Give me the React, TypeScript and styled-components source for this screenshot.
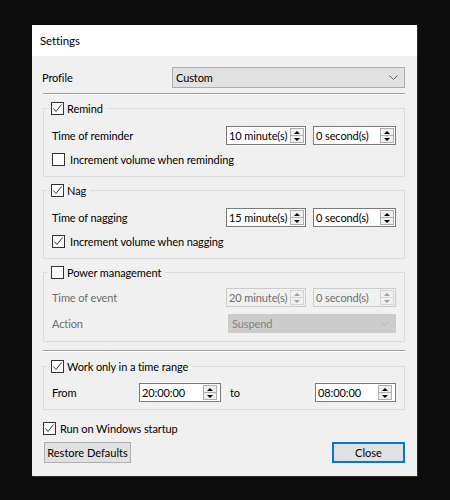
import styled, { createGlobalStyle } from "styled-components";

const GlobalStyle = createGlobalStyle`
  html, body {
    margin: 0;
    padding: 0;
    background: #0c0c0c;
  }
  body {
    font-family: Lato, "Liberation Sans", sans-serif;
    font-size: 11px;
    letter-spacing: -0.1px;
    color: #000;
  }
`;

type CheckProps = { checked?: boolean };

function CheckBox({ checked }: CheckProps) {
  return (
    <Box>
      {checked && (
        <svg width="11" height="11" viewBox="0 0 11 11">
          <polyline points="1.5,5.5 4,8.5 9.5,1.5" fill="none" stroke="#333" strokeWidth="1" />
        </svg>
      )}
    </Box>
  );
}

function Chevron({ color }: { color: string }) {
  return (
    <svg width="9" height="5" viewBox="0 0 9 5">
      <polyline points="0.5,0.5 4.5,4.5 8.5,0.5" fill="none" stroke={color} strokeWidth="1" />
    </svg>
  );
}

type SpinProps = { value: string; width: number; disabled?: boolean; inset?: number };

function Spin({ value, width, disabled, inset = 1 }: SpinProps) {
  return (
    <SpinField $width={width} $disabled={disabled}>
      <SpinText>{value}</SpinText>
      <UpDown $inset={inset} $disabled={disabled}>
        <Step>
          <ArrowUp $disabled={disabled} />
        </Step>
        <Step>
          <ArrowDown $disabled={disabled} />
        </Step>
      </UpDown>
    </SpinField>
  );
}

export default function App() {
  return (
    <Screen>
      <GlobalStyle />
      <Window>
        <TitleBar>Settings</TitleBar>
        <Body>
          <ProfileRow>
            <ProfileLabel>Profile</ProfileLabel>
            <Combo>
              <span>Custom</span>
              <Chevron color="#606060" />
            </Combo>
          </ProfileRow>
          <Separator $top={5} />

          <Group $top={6}>
            <Legend>
              <LegendInner>
                <CheckBox checked />
                Remind
              </LegendInner>
            </Legend>
            <GroupBody $top={10} $bottom={9}>
              <Row>
                <Label>Time of reminder</Label>
                <Spin value="10 minute(s)" width={80} />
                <Spin value="0 second(s)" width={83} />
              </Row>
              <CheckRow $gap={5}>
                <CheckBox />
                Increment volume when reminding
              </CheckRow>
            </GroupBody>
          </Group>

          <Group $top={6}>
            <Legend>
              <LegendInner>
                <CheckBox checked />
                Nag
              </LegendInner>
            </Legend>
            <GroupBody $top={10} $bottom={9}>
              <Row>
                <Label>Time of nagging</Label>
                <Spin value="15 minute(s)" width={80} />
                <Spin value="0 second(s)" width={83} />
              </Row>
              <CheckRow $gap={5}>
                <CheckBox checked />
                Increment volume when nagging
              </CheckRow>
            </GroupBody>
          </Group>

          <Group $top={6}>
            <Legend>
              <LegendInner>
                <CheckBox />
                Power management
              </LegendInner>
            </Legend>
            <GroupBody $top={8} $bottom={8}>
              <Row>
                <Label $disabled>Time of event</Label>
                <Spin value="20 minute(s)" width={80} disabled />
                <Spin value="0 second(s)" width={83} disabled />
              </Row>
              <Row>
                <Label $disabled>Action</Label>
                <DisabledCombo>
                  <span>Suspend</span>
                  <Chevron color="#b4b4b4" />
                </DisabledCombo>
              </Row>
            </GroupBody>
          </Group>

          <Separator $top={8} />

          <Group $top={7}>
            <Legend>
              <LegendInner>
                <CheckBox checked />
                Work only in a time range
              </LegendInner>
            </Legend>
            <GroupBody $top={9} $bottom={7}>
              <Row>
                <FromLabel>From</FromLabel>
                <Spin value="20:00:00" width={82} inset={3} />
                <ToLabel>to</ToLabel>
                <Spin value="08:00:00" width={81} inset={3} />
              </Row>
            </GroupBody>
          </Group>

          <StartupRow $gap={4}>
            <CheckBox checked />
            Run on Windows startup
          </StartupRow>

          <ButtonRow>
            <Button>Restore Defaults</Button>
            <Button $primary>Close</Button>
          </ButtonRow>
        </Body>
      </Window>
    </Screen>
  );
}

const Screen = styled.div`
  min-height: 500px;
  padding: 25px 0 0 32px;
  box-sizing: border-box;
`;

const Window = styled.div`
  width: 385px;
  height: 451px;
  background: #f0f0f0;
  display: flex;
  flex-direction: column;
  box-shadow: 1px 1px 0 #2b2b2b;
`;

const TitleBar = styled.div`
  height: 31px;
  flex-shrink: 0;
  background: #fff;
  display: flex;
  align-items: center;
  padding-left: 8px;
  font-size: 11.5px;
`;

const Body = styled.div`
  display: flex;
  flex-direction: column;
  padding: 11px 12px 12px 11px;
`;

const ProfileRow = styled.div`
  display: flex;
  align-items: center;
  height: 21px;
`;

const ProfileLabel = styled.div`
  width: 130px;
  margin-left: -1px;
`;

const Combo = styled.div`
  flex: 1;
  height: 21px;
  box-sizing: border-box;
  display: flex;
  align-items: center;
  justify-content: space-between;
  padding: 0 6px 0 3px;
  background: #e1e1e1;
  border: 1px solid #adadad;
`;

const DisabledCombo = styled(Combo)`
  flex: 0 0 168px;
  height: 19px;
  background: #cccccc;
  border-color: #cccccc;
  color: #838383;
`;

const Separator = styled.div<{ $top: number }>`
  margin-top: ${(p) => p.$top}px;
  border-top: 1px solid #a0a0a0;
  border-bottom: 1px solid #fff;
`;

const Group = styled.fieldset<{ $top: number }>`
  margin: ${(p) => p.$top}px 0 0;
  padding: 0;
  min-width: 0;
  border: 1px solid #dcdcdc;
`;

const Legend = styled.legend`
  margin-left: 3px;
  padding: 0 4px;
  height: 15px;
  line-height: 15px;
`;

const LegendInner = styled.span`
  display: inline-flex;
  align-items: center;
  gap: 3px;
  height: 15px;
`;

const GroupBody = styled.div<{ $top: number; $bottom: number }>`
  display: flex;
  flex-direction: column;
  gap: 7px;
  padding: ${(p) => p.$top}px 8px ${(p) => p.$bottom}px 8px;
`;

const Row = styled.div`
  display: flex;
  align-items: center;
  gap: 7px;
  height: 19px;
`;

const Label = styled.div<{ $disabled?: boolean }>`
  flex: 1;
  color: ${(p) => (p.$disabled ? "#6d6d6d" : "#000")};
`;

const FromLabel = styled.div`
  width: 80px;
`;

const ToLabel = styled.div`
  flex: 1;
  padding-left: 2px;
`;

const CheckRow = styled.div<{ $gap: number }>`
  display: flex;
  align-items: center;
  gap: ${(p) => p.$gap}px;
  height: 15px;
`;

const StartupRow = styled(CheckRow)`
  margin-top: 11px;
`;

const Box = styled.span`
  width: 13px;
  height: 13px;
  box-sizing: border-box;
  flex-shrink: 0;
  display: inline-flex;
  align-items: center;
  justify-content: center;
  background: #fff;
  border: 1px solid #333;
`;

const SpinField = styled.div<{ $width: number; $disabled?: boolean }>`
  width: ${(p) => p.$width}px;
  height: 19px;
  box-sizing: border-box;
  display: flex;
  align-items: center;
  background: ${(p) => (p.$disabled ? "#f0f0f0" : "#fff")};
  border: 1px solid ${(p) => (p.$disabled ? "#cccccc" : "#7a7a7a")};
  color: ${(p) => (p.$disabled ? "#6d6d6d" : "#000")};
`;

const SpinText = styled.span`
  flex: 1;
  padding-left: 2px;
  white-space: nowrap;
`;

const UpDown = styled.div<{ $inset: number; $disabled?: boolean }>`
  width: 14px;
  height: 15px;
  box-sizing: border-box;
  margin-right: ${(p) => p.$inset}px;
  display: flex;
  flex-direction: column;
  background: #f0f0f0;
  border: 1px solid ${(p) => (p.$disabled ? "#d5d5d5" : "#adadad")};

  & > * + * {
    border-top: 1px solid ${(p) => (p.$disabled ? "#d5d5d5" : "#adadad")};
  }
`;

const Step = styled.div`
  flex: 1;
  display: flex;
  align-items: center;
  justify-content: center;
`;

const ArrowUp = styled.span<{ $disabled?: boolean }>`
  width: 0;
  height: 0;
  border-left: 3px solid transparent;
  border-right: 3px solid transparent;
  border-bottom: 3px solid ${(p) => (p.$disabled ? "#a0a0a0" : "#000")};
`;

const ArrowDown = styled.span<{ $disabled?: boolean }>`
  width: 0;
  height: 0;
  border-left: 3px solid transparent;
  border-right: 3px solid transparent;
  border-top: 3px solid ${(p) => (p.$disabled ? "#a0a0a0" : "#000")};
`;

const ButtonRow = styled.div`
  display: flex;
  justify-content: space-between;
  margin-top: 6px;
  padding-left: 1px;
`;

const Button = styled.button<{ $primary?: boolean }>`
  height: 21px;
  padding: 0;
  width: ${(p) => (p.$primary ? "73px" : "87px")};
  font: inherit;
  white-space: nowrap;
  color: #000;
  background: #e1e1e1;
  border: ${(p) => (p.$primary ? "2px solid #0078d7" : "1px solid #adadad")};
  border-radius: 0;
`;
